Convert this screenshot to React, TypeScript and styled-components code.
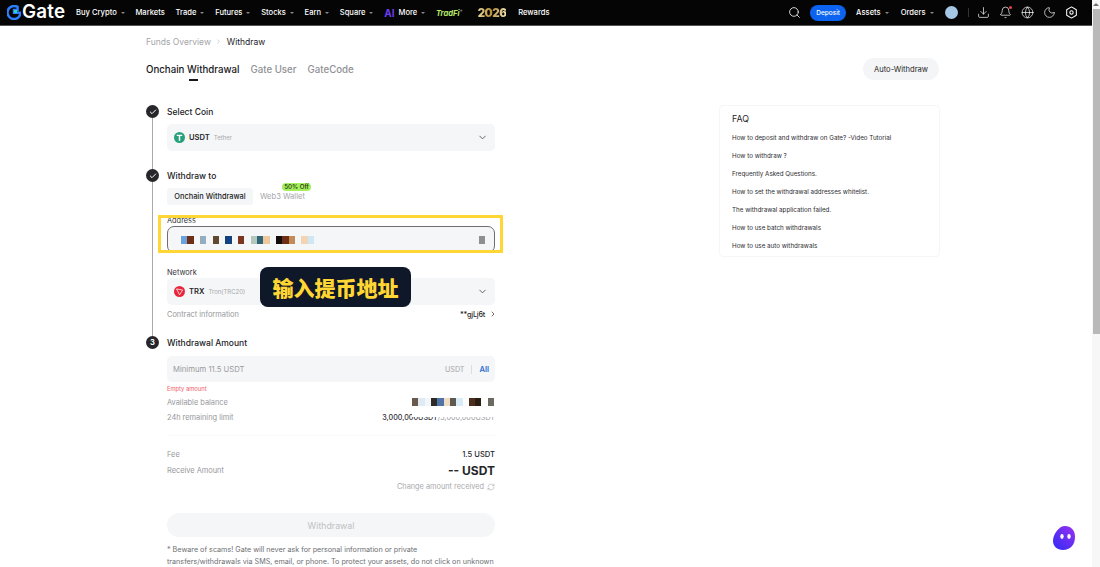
import styled, { createGlobalStyle } from "styled-components"
import { Bell, Check, ChevronDown, ChevronRight, Download, Globe, Moon, RefreshCw, Search } from "lucide-react"

const GlobalStyle = createGlobalStyle`
    html, body {
        margin: 0;
        height: 100%;
        overflow: hidden;
        background: #fff;
        font-family: Inter, "Noto Sans", "Liberation Sans", sans-serif;
        color: #1b1b1f;
    }
    * {
        box-sizing: border-box;
    }
`;

const navLeft = [
    { label: "Buy Crypto", caret: true },
    { label: "Markets" },
    { label: "Trade", caret: true },
    { label: "Futures", caret: true },
    { label: "Stocks", caret: true },
    { label: "Earn", caret: true },
    { label: "Square", caret: true },
];

const faqs = [
    "How to deposit and withdraw on Gate? -Video Tutorial",
    "How to withdraw ?",
    "Frequently Asked Questions.",
    "How to set the withdrawal addresses whitelist.",
    "The withdrawal application failed.",
    "How to use batch withdrawals",
    "How to use auto withdrawals",
];

const addressPixels = [
    ["#6aa3dc", "#6e2f16"],
    ["#95adc0"],
    ["#5f4930"],
    ["#16417f"],
    ["#7b3621"],
    ["#b5c7bf", "#2f6777", "#efc99c"],
    ["#120c0a", "#6e2f16", "#c48a58"],
    ["#f1d5b5", "#cfe6f4"],
];

const balancePixels = ["#6b5a4b", "#dfeaf2", "#f1f6fa", "#2d2a28", "#4f75a6", "#f0dcc2", "#5f5a50", "#d9ebf6", "#fff", "#4b2f1c", "#2a1d14", "#fff", "#6d6a62"];

function SettingsHex() {
    return (
        <svg width="13" height="13" viewBox="0 0 14 14" fill="none" stroke="#fff" strokeWidth="1.1">
            <path d="M7 1 12.2 4v6L7 13 1.8 10V4z" strokeLinejoin="round" />
            <circle cx="7" cy="7" r="1.8" />
        </svg>
    )
}

function LogoMark() {
    return (
        <svg width="14" height="15" viewBox="0 0 14 15">
            <path d="M7 1a6.5 6.5 0 1 0 6.5 6.8H7V5h3.6V1.9A6.5 6.5 0 0 0 7 1z" fill="none" stroke="#2b7fff" strokeWidth="2.4" />
            <rect x="7" y="5" width="3" height="3" fill="#29d3c4" />
        </svg>
    )
}

function TetherIcon() {
    return (
        <svg width="11" height="11" viewBox="0 0 12 12">
            <circle cx="6" cy="6" r="6" fill="#26a17b" />
            <path d="M3 3h6v1.4H6.8V9.5H5.2V4.4H3z" fill="#fff" />
        </svg>
    )
}

function TronIcon() {
    return (
        <svg width="11" height="11" viewBox="0 0 12 12">
            <circle cx="6" cy="6" r="6" fill="#e8263b" />
            <path d="M2.8 3.2 9.4 4.4 6 9.6z" fill="none" stroke="#fff" strokeWidth=".8" />
        </svg>
    )
}

function ChatBlob() {
    return (
        <svg width="24" height="26" viewBox="0 0 24 26">
            <defs>
                <linearGradient id="blob" x1="0" y1="1" x2="1" y2="0">
                    <stop offset="0" stopColor="#2f2cf5" />
                    <stop offset="1" stopColor="#9a2ff0" />
                </linearGradient>
            </defs>
            <path d="M13 1c6 0 10 4 10 11 0 8-5 13-12 13C5 25 1 21 1 16 1 9 7 1 13 1z" fill="url(#blob)" />
            <ellipse cx="10" cy="11.5" rx="1.7" ry="2.4" fill="#fff" />
            <ellipse cx="17" cy="11.5" rx="1.7" ry="2.4" fill="#fff" />
        </svg>
    )
}

export default function App() {
    return (
        <Shell>
            <GlobalStyle />
            <Viewport>
                <Header>
                    <Logo>
                        <LogoMark />
                        <LogoText>Gate</LogoText>
                    </Logo>
                    <NavList>
                        {navLeft.map((item) => (
                            <NavItem key={item.label}>
                                {item.label}
                                {item.caret && <Caret />}
                            </NavItem>
                        ))}
                        <NavItem>
                            <AiMark>AI</AiMark>
                            More
                            <Caret />
                        </NavItem>
                        <TradFi>TradFi<sup>+</sup></TradFi>
                        <Year>2026</Year>
                        <NavItem>Rewards</NavItem>
                    </NavList>
                    <NavRight>
                        <Search size={13} color="#fff" strokeWidth={1.5} />
                        <DepositPill>Deposit</DepositPill>
                        <NavItem>Assets<Caret /></NavItem>
                        <NavItem>Orders<Caret /></NavItem>
                        <Avatar />
                        <NavDivider />
                        <IconRow>
                            <Download size={13} color="#fff" strokeWidth={1.3} />
                            <BellWrap>
                                <Bell size={13} color="#fff" strokeWidth={1.3} />
                                <BellDot />
                            </BellWrap>
                            <Globe size={13} color="#fff" strokeWidth={1.3} />
                            <Moon size={13} color="#fff" strokeWidth={1.3} />
                            <SettingsHex />
                        </IconRow>
                    </NavRight>
                </Header>

                <Main>
                    <Breadcrumb>
                        <Crumb>Funds Overview</Crumb>
                        <CrumbSep><ChevronRight size={7} /></CrumbSep>
                        <Crumb $current>Withdraw</Crumb>
                    </Breadcrumb>

                    <TabRow>
                        <Tab $active>Onchain Withdrawal</Tab>
                        <Tab>Gate User</Tab>
                        <Tab>GateCode</Tab>
                        <AutoButton>Auto-Withdraw</AutoButton>
                    </TabRow>

                    <Columns>
                        <Steps>
                            <Step $height={64}>
                                <Rail>
                                    <StepDot><Check size={8} strokeWidth={3} /></StepDot>
                                    <RailLine />
                                </Rail>
                                <StepBody>
                                    <StepTitle>Select Coin</StepTitle>
                                    <SelectBox>
                                        <TetherIcon />
                                        <CoinName>USDT</CoinName>
                                        <CoinSub>Tether</CoinSub>
                                        <ChevronDown size={11} strokeWidth={1.6} />
                                    </SelectBox>
                                </StepBody>
                            </Step>

                            <Step $height={167}>
                                <Rail>
                                    <StepDot><Check size={8} strokeWidth={3} /></StepDot>
                                    <RailLine />
                                </Rail>
                                <StepBody>
                                    <StepTitle>Withdraw to</StepTitle>
                                    <ModeRow>
                                        <ModeChip>Onchain Withdrawal</ModeChip>
                                        <ModeLink>
                                            Web3 Wallet
                                            <OffBadge>50% Off</OffBadge>
                                        </ModeLink>
                                    </ModeRow>
                                    <FieldLabel $top={10}>Address</FieldLabel>
                                    <AddressBox>
                                        <Mosaic>
                                            {addressPixels.map((group, i) => (
                                                <MosaicGroup key={i}>
                                                    {group.map((c, j) => <Pixel key={j} $color={c} />)}
                                                </MosaicGroup>
                                            ))}
                                        </Mosaic>
                                        <Pixel $color="#8f8f8f" />
                                    </AddressBox>
                                    <FieldLabel $top={14}>Network</FieldLabel>
                                    <SelectBox>
                                        <TronIcon />
                                        <CoinName>TRX</CoinName>
                                        <CoinSub>Tron(TRC20)</CoinSub>
                                        <ChevronDown size={11} strokeWidth={1.6} />
                                    </SelectBox>
                                    <InfoRow $top={4}>
                                        <InfoLabel>Contract information</InfoLabel>
                                        <ContractValue>**gjLj6t <ChevronRight size={8} /></ContractValue>
                                    </InfoRow>
                                </StepBody>
                            </Step>

                            <Step>
                                <Rail>
                                    <StepDot>3</StepDot>
                                </Rail>
                                <StepBody>
                                    <StepTitle>Withdrawal Amount</StepTitle>
                                    <AmountBox>
                                        <AmountHint>Minimum 11.5 USDT</AmountHint>
                                        <AmountUnit>USDT</AmountUnit>
                                        <AmountAll>All</AmountAll>
                                    </AmountBox>
                                    <ErrorText>Empty amount</ErrorText>
                                    <InfoRow $top={4}>
                                        <InfoLabel>Available balance</InfoLabel>
                                        <BalanceMosaic>
                                            {balancePixels.map((c, i) => <Pixel key={i} $color={c} />)}
                                        </BalanceMosaic>
                                    </InfoRow>
                                    <InfoRow $top={5}>
                                        <InfoLabel>24h remaining limit</InfoLabel>
                                        <LimitValue>3,000,000USDT<LimitTotal>/3,000,000USDT</LimitTotal></LimitValue>
                                    </InfoRow>
                                    <Divider />
                                    <InfoRow $top={13}>
                                        <InfoLabel>Fee</InfoLabel>
                                        <FeeValue>1.5 USDT</FeeValue>
                                    </InfoRow>
                                    <InfoRow $top={4}>
                                        <InfoLabel>Receive Amount</InfoLabel>
                                        <ReceiveValue>-- USDT</ReceiveValue>
                                    </InfoRow>
                                    <ChangeRow>
                                        Change amount received <RefreshCw size={8} strokeWidth={1.6} />
                                    </ChangeRow>
                                    <WithdrawButton>Withdrawal</WithdrawButton>
                                    <Warning>
                                        <WarningLine>* Beware of scams! Gate will never ask for personal information or private</WarningLine>
                                        <WarningLine>transfers/withdrawals via SMS, email, or phone. To protect your assets, do not click on unknown</WarningLine>
                                    </Warning>
                                </StepBody>
                            </Step>

                            <AddressHighlight />
                            <Callout>输入提币地址</Callout>
                        </Steps>

                        <FaqCard>
                            <FaqTitle>FAQ</FaqTitle>
                            {faqs.map((q) => <FaqItem key={q}>{q}</FaqItem>)}
                        </FaqCard>
                    </Columns>
                </Main>
                <ChatFloat><ChatBlob /></ChatFloat>
            </Viewport>
            <ScrollTrack>
                <ScrollArrow />
                <ScrollThumb />
            </ScrollTrack>
        </Shell>
    )
}

const Shell = styled.div`
    display: flex;
    width: 1100px;
    height: 567px;
    overflow: hidden;
`;

const Viewport = styled.div`
    position: relative;
    flex: 1;
    min-width: 0;
    overflow: hidden;
`;

const Header = styled.header`
    display: flex;
    align-items: center;
    height: 26px;
    padding: 0 14.5px 0 7px;
    background: #050505;
    border-bottom: 1px solid #555;
    color: #fff;
    font-size: 7.6px;
    font-weight: 500;
`;

const Logo = styled.div`
    display: flex;
    align-items: center;
    gap: 1px;
    width: 69px;
`;

const LogoText = styled.span`
    font-size: 18.8px;
    font-weight: 600;
    line-height: 1;
    letter-spacing: .2px;
    color: #fff;
`;

const NavList = styled.nav`
    display: flex;
    align-items: center;
    gap: 10.7px;
`;

const NavItem = styled.span`
    display: inline-flex;
    align-items: center;
    white-space: nowrap;
`;

const Caret = styled.i`
    width: 0;
    height: 0;
    margin-left: 4px;
    border: 2px solid transparent;
    border-top: 2px solid #8a8a8a;
    border-bottom: 0;
`;

const AiMark = styled.b`
    margin-right: 4px;
    font-size: 10px;
    font-weight: 700;
    color: #6a3df0;
`;

const TradFi = styled.span`
    font-style: italic;
    font-weight: 700;
    color: #b7ea6a;

    sup {
        font-size: 5px;
        color: #888;
    }
`;

const Year = styled.span`
    margin-left: 4px;
    margin-right: 1px;
    font-size: 11.5px;
    font-weight: 900;
    letter-spacing: -.5px;
    background: linear-gradient(100deg, #f3e2a6, #b98f3c 45%, #f4e7b8);
    -webkit-background-clip: text;
    background-clip: text;
    color: transparent;
`;

const NavRight = styled.div`
    display: flex;
    align-items: center;
    margin-left: auto;

    & > svg {
        margin-right: 9px;
    }

    & > span:nth-of-type(2) {
        margin-right: 12px;
    }
`;

const DepositPill = styled.span`
    display: flex;
    align-items: center;
    justify-content: center;
    width: 36px;
    height: 16px;
    margin-right: 10px;
    border-radius: 8px;
    background: #0b63f0;
    color: #fff;
    font-size: 6.5px;
`;

const Avatar = styled.span`
    width: 13px;
    height: 13px;
    margin-left: 11px;
    border-radius: 50%;
    background: #a6c6e6;
`;

const NavDivider = styled.span`
    width: 1px;
    height: 9px;
    margin: 0 8px 0 10px;
    background: #333;
`;

const IconRow = styled.div`
    display: flex;
    align-items: center;
    gap: 9px;
`;

const BellWrap = styled.span`
    position: relative;
    display: flex;
`;

const BellDot = styled.i`
    position: absolute;
    top: 0;
    right: 0;
    width: 3px;
    height: 3px;
    border-radius: 50%;
    background: #f0414c;
`;

const Main = styled.main`
    padding: 0 0 0 146px;
`;

const Breadcrumb = styled.div`
    display: flex;
    align-items: center;
    gap: 4.5px;
    height: 11px;
    margin-top: 10px;
    font-size: 8.5px;
`;

const Crumb = styled.span<{ $current?: boolean }>`
    color: ${(p) => (p.$current ? "#1b1b1f" : "#a4a5a8")};
`;

const CrumbSep = styled.span`
    display: flex;
    color: #b5b5b5;
`;

const TabRow = styled.div`
    display: flex;
    align-items: center;
    gap: 11px;
    width: 793px;
    height: 22px;
    margin-top: 11px;
`;

const Tab = styled.span<{ $active?: boolean }>`
    position: relative;
    font-size: 9.7px;
    font-weight: 500;
    color: ${(p) => (p.$active ? "#17171b" : "#909196")};

    ${(p) => p.$active && `
        &::after {
            content: "";
            position: absolute;
            left: 50%;
            bottom: -6px;
            width: 9px;
            height: 2px;
            margin-left: -4px;
            background: #17171b;
        }
    `}
`;

const AutoButton = styled.span`
    display: flex;
    align-items: center;
    justify-content: center;
    width: 76px;
    height: 22px;
    margin-left: auto;
    border-radius: 11px;
    background: #f4f5f6;
    font-size: 7.6px;
    color: #26262a;
`;

const Columns = styled.div`
    display: flex;
    margin-top: 25px;
`;

const Steps = styled.div`
    position: relative;
    width: 349px;
`;

const Step = styled.section<{ $height?: number }>`
    display: grid;
    grid-template-columns: 21px 328px;
    height: ${(p) => (p.$height ? `${p.$height}px` : "auto")};
`;

const Rail = styled.div`
    display: flex;
    flex-direction: column;
    align-items: flex-start;
`;

const StepDot = styled.span`
    display: flex;
    flex: none;
    align-items: center;
    justify-content: center;
    width: 13px;
    height: 13px;
    border-radius: 50%;
    background: #26262b;
    color: #fff;
    font-size: 7.5px;
    font-weight: 700;
`;

const RailLine = styled.span`
    flex: 1;
    width: 1px;
    margin-left: 6px;
    background: #a9a9ac;
`;

const StepBody = styled.div`
    min-width: 0;
`;

const StepTitle = styled.h3`
    margin: 0;
    height: 13px;
    font-size: 8.5px;
    line-height: 15px;
    font-weight: 500;
    color: #222226;
`;

const SelectBox = styled.div`
    display: flex;
    align-items: center;
    gap: 4px;
    height: 27px;
    padding: 0 7px;
    border-radius: 5px;
    background: #f5f6f7;
    color: #333;

    h3 + & {
        margin-top: 6px;
    }
`;

const CoinName = styled.span`
    font-size: 7.6px;
    font-weight: 600;
    color: #26262a;
`;

const CoinSub = styled.span`
    flex: 1;
    font-size: 6px;
    color: #a8a9ac;
`;

const ModeRow = styled.div`
    display: flex;
    align-items: center;
    gap: 7px;
    height: 17px;
    margin-top: 6px;
`;

const ModeChip = styled.span`
    display: flex;
    align-items: center;
    justify-content: center;
    width: 86px;
    height: 17px;
    border-radius: 3px;
    background: #f5f6f7;
    font-size: 7.4px;
    font-weight: 500;
`;

const ModeLink = styled.span`
    position: relative;
    font-size: 7.6px;
    color: #a4a5a8;
`;

const OffBadge = styled.span`
    position: absolute;
    top: -9px;
    right: -6px;
    padding: 0 2px;
    border-radius: 4px;
    background: #a5ee5d;
    color: #16330a;
    font-size: 6.2px;
    font-weight: 500;
    line-height: 8px;
    white-space: nowrap;
`;

const FieldLabel = styled.div<{ $top: number }>`
    height: 11px;
    margin-top: ${(p) => p.$top}px;
    font-size: 7.4px;
    line-height: 11px;
    color: #333338;
`;

const AddressBox = styled.div`
    display: flex;
    align-items: center;
    justify-content: space-between;
    height: 27px;
    padding: 0 9px 0 13px;
    border: 1px solid #6d6e72;
    border-radius: 7px;
    background: #f5f6f7;
`;

const Mosaic = styled.div`
    display: flex;
    gap: 6.4px;
`;

const MosaicGroup = styled.div`
    display: flex;
`;

const Pixel = styled.i<{ $color: string }>`
    display: block;
    width: 6.3px;
    height: 8px;
    background: ${(p) => p.$color};
`;

const InfoRow = styled.div<{ $top: number }>`
    display: flex;
    align-items: center;
    justify-content: space-between;
    min-height: 10px;
    margin-top: ${(p) => p.$top}px;
`;

const InfoLabel = styled.span`
    font-size: 7.4px;
    color: #96979b;
`;

const ContractValue = styled.span`
    display: flex;
    align-items: center;
    gap: 4px;
    margin-right: -2px;
    font-size: 7.2px;
    font-weight: 500;
    letter-spacing: -.2px;
    color: #26262a;
`;

const AmountBox = styled.div`
    display: flex;
    align-items: center;
    height: 26px;
    margin-top: 7px;
    padding: 0 6px;
    border-radius: 5px;
    background: #f5f6f7;
`;

const AmountHint = styled.span`
    flex: 1;
    font-size: 7.7px;
    color: #9a9b9f;
`;

const AmountUnit = styled.span`
    padding-right: 6px;
    border-right: 1px solid #dcdde0;
    font-size: 7.2px;
    color: #a4a5a8;
`;

const AmountAll = styled.span`
    padding-left: 8px;
    font-size: 7.6px;
    font-weight: 600;
    color: #2c6fd1;
`;

const ErrorText = styled.div`
    margin-top: 3px;
    font-size: 5.8px;
    line-height: 8px;
    color: #ef5a68;
`;

const BalanceMosaic = styled.div`
    display: flex;
    margin-right: 1px;
`;

const LimitValue = styled.span`
    position: relative;
    font-size: 7.2px;
    font-weight: 500;
    color: #33333a;

    &::before {
        content: "";
        position: absolute;
        top: 0;
        left: 30px;
        right: 0;
        height: 4px;
        background: #fff;
    }
`;

const LimitTotal = styled.span`
    font-weight: 400;
    color: #9a9b9f;
`;

const Divider = styled.div`
    height: 1px;
    margin-top: 13px;
    background: #f8f8f9;
`;

const FeeValue = styled.span`
    font-size: 7.6px;
    font-weight: 500;
    color: #26262a;
`;

const ReceiveValue = styled.span`
    font-size: 12px;
    font-weight: 700;
    color: #26262a;
`;

const ChangeRow = styled.div`
    display: flex;
    align-items: center;
    justify-content: flex-end;
    gap: 3px;
    margin-top: 4px;
    font-size: 7.35px;
    line-height: 10px;
    color: #a8a9ac;
`;

const WithdrawButton = styled.div`
    display: flex;
    align-items: center;
    justify-content: center;
    height: 24px;
    margin-top: 21px;
    border-radius: 12px;
    background: #f5f6f7;
    font-size: 8.8px;
    color: #c0c1c4;
`;

const Warning = styled.p`
    margin: 7px 0 0;
    font-size: 7.2px;
    line-height: 12px;
    color: #6d6e72;
`;

const WarningLine = styled.span`
    display: block;
    white-space: nowrap;
`;

const AddressHighlight = styled.div`
    position: absolute;
    top: 110px;
    left: 12px;
    width: 345px;
    height: 38px;
    border: 3px solid #ffd633;
    pointer-events: none;
`;

const Callout = styled.div`
    position: absolute;
    top: 162px;
    left: 114px;
    width: 151px;
    height: 40px;
    border-radius: 8px;
    background: #0f1828;
    color: #ffd633;
    font-family: "Noto Sans CJK SC", sans-serif;
    font-size: 21px;
    font-weight: 900;
    line-height: 40px;
    text-align: center;
`;

const FaqCard = styled.aside`
    align-self: flex-start;
    width: 221px;
    height: 152px;
    margin: 0 0 0 224px;
    padding: 7px 12px 0;
    border: 1px solid #f6f6f7;
    border-radius: 4px;
`;

const FaqTitle = styled.div`
    margin-bottom: 7px;
    font-size: 8.8px;
    line-height: 12px;
    color: #26262a;
`;

const FaqItem = styled.div`
    height: 18px;
    font-size: 6.25px;
    line-height: 12px;
    color: #2c2c30;
    white-space: nowrap;
`;

const ChatFloat = styled.div`
    position: absolute;
    right: 16px;
    bottom: 16px;
    display: flex;
`;

const ScrollTrack = styled.div`
    display: flex;
    flex: none;
    flex-direction: column;
    align-items: center;
    width: 8px;
    background: #f7f7f7;
`;

const ScrollArrow = styled.i`
    width: 0;
    height: 0;
    margin: 3px 0;
    border: 3px solid transparent;
    border-bottom: 3px solid #6f6f6f;
    border-top: 0;
`;

const ScrollThumb = styled.div`
    width: 7px;
    height: 325px;
    background: #b9b9b9;
`;
